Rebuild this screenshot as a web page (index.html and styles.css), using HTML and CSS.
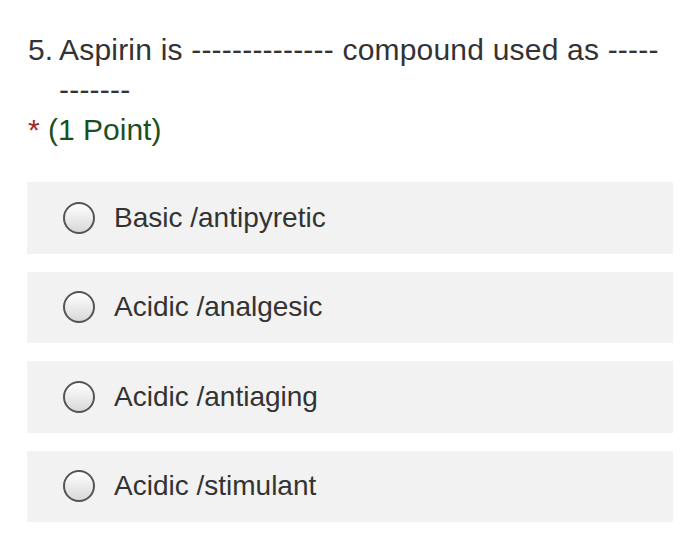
FILE: index.html
```html
<!DOCTYPE html>
<html>
<head>
<meta charset="utf-8">
<link rel="stylesheet" href="styles.css">
</head>
<body>
<div class="page">
  <div class="question">
    <span class="num">5.</span>
    <span class="qtext">Aspirin is -------------- compound used as -----<br>-------</span>
  </div>
  <div class="points"><span class="star">*</span> (1 Point)</div>
  <div class="options">
    <label class="option"><span class="radio"></span><span class="label">Basic /antipyretic</span></label>
    <label class="option"><span class="radio"></span><span class="label">Acidic /analgesic</span></label>
    <label class="option"><span class="radio"></span><span class="label">Acidic /antiaging</span></label>
    <label class="option"><span class="radio"></span><span class="label">Acidic /stimulant</span></label>
  </div>
</div>
</body>
</html>
```
FILE: styles.css
```css
html, body {
  margin: 0;
  padding: 0;
  background: #ffffff;
}
body {
  font-family: "Liberation Sans", Arial, sans-serif;
  color: #333333;
}
.page {
  padding: 30px 27px 0 27px;
}
.question {
  display: flex;
  font-size: 30px;
  line-height: 40px;
  padding-left: 1px;
}
.num {
  flex: none;
  width: 31px;
}
.qtext {
  flex: 1;
  letter-spacing: 0.2px;
}
.points {
  font-size: 30px;
  line-height: 40px;
  color: #1d4f1d;
  padding-left: 1px;
}
.star {
  color: #a4262c;
}
.options {
  display: flex;
  flex-direction: column;
  gap: 18px;
  margin-top: 32px;
}
.option {
  display: flex;
  align-items: center;
  height: 71.5px;
  background: #f2f2f2;
  padding-left: 36px;
}
.radio {
  width: 28px;
  height: 28px;
  border: 2px solid #555555;
  border-radius: 50%;
  background: linear-gradient(#ffffff, #d8d8d8);
  flex: none;
}
.label {
  font-size: 28px;
  margin-left: 19px;
  color: #333333;
}
```
